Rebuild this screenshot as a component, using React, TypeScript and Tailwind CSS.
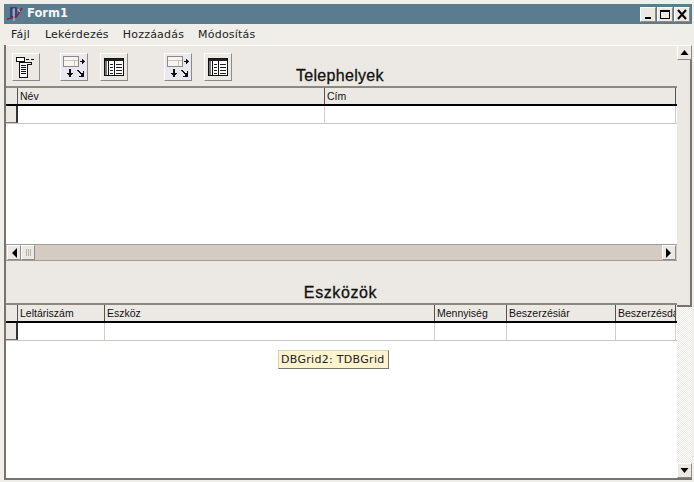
import React from 'react'

const ui = "font-['DejaVu_Sans',sans-serif]"
const grid = "font-['Liberation_Sans',Arial,sans-serif]"

const raised = 'border border-t-white border-l-white border-r-[#8d8a84] border-b-[#8d8a84]'

const ListIcon = () => (
  <svg width="22" height="22" viewBox="0 0 22 22" shapeRendering="crispEdges">
    <rect x="1.5" y="1.5" width="8" height="4" fill="#fff" stroke="#111" />
    <path d="M11 3h3M16 3h3" stroke="#111" />
    <path d="M4.5 6v15h8V8h4V6z" fill="#f4f4f4" stroke="#111" />
    <path d="M6 9h5M6 11h5M6 13h5M6 15h5M6 17h5" stroke="#111" />
  </svg>
)

const MoveIcon = () => (
  <svg width="24" height="24" viewBox="0 0 24 24" shapeRendering="crispEdges">
    <rect x="1.5" y="1.5" width="15" height="10" fill="#f6f5f2" stroke="#8d8a84" />
    <path d="M2 5h14M12 5v6" stroke="#c9c6c0" />
    <path d="M18 6h5v1h-5z" fill="#111" />
    <path d="M20 4h1v5h-1zM21 5h1v3h-1z" fill="#111" />
    <path d="M7 14h2v7H7z" fill="#111" />
    <path d="M5 18h6v1H5zM6 19h4v1H6zM7 20h2v2H7z" fill="#111" />
    <path d="M15 15h2v1h-2zM16 16h2v1h-2zM17 17h2v1h-2zM18 18h2v1h-2z" fill="#111" />
    <path d="M21 16h1v6h-1zM17 21h5v1h-5zM20 18h1v3h-1zM19 19h2v2h-2z" fill="#111" />
  </svg>
)

const TableIcon = () => (
  <svg width="20" height="18" viewBox="0 0 20 18" shapeRendering="crispEdges">
    <rect x="0.5" y="0.5" width="19" height="17" fill="#fff" stroke="#111" />
    <rect x="1" y="1" width="18" height="2" fill="#222" />
    <rect x="1" y="3" width="2" height="14" fill="#777" />
    <path d="M4.5 3v14M10.5 3v14" stroke="#111" />
    <path d="M6 6h3M12 6h6M6 9h3M12 9h6M6 12h3M12 12h6M6 15h3M12 15h6" stroke="#222" />
  </svg>
)

const ToolButton = ({ tint, children }: { tint?: boolean; children: React.ReactNode }) => (
  <button className={`flex h-[28px] w-[28px] items-center justify-center ${raised} ${tint ? 'bg-[#e9e7f0]' : 'bg-[#ece9e4]'}`}>
    {children}
  </button>
)

const Arrow = ({ d }: { d: string }) => (
  <svg width="8" height="10" viewBox="0 0 8 10"><path d={d} fill="#000" /></svg>
)

const WinButton = ({ children }: { children: React.ReactNode }) => (
  <div className={`flex h-[15px] w-[16px] items-center justify-center bg-[#ece9e4] ${raised}`}>
    <svg width="12" height="11" viewBox="0 0 12 11" shapeRendering="crispEdges">{children}</svg>
  </div>
)

type Col = { title: string; width: string }

const DataGrid = ({ cols, scrollbar }: { cols: Col[]; scrollbar?: boolean }) => (
  <div className="flex h-[175px] flex-col border-t-2 border-t-[#8b8880] bg-white">
    <div className={`flex h-[18px] border-b-2 border-b-black bg-[#ece9e4] ${grid}`}>
      <div className="w-[12px] border-r border-r-[#55534e]" />
      {cols.map((c) => (
        <div key={c.title} className={`${c.width} overflow-hidden whitespace-nowrap border-r border-r-[#55534e] pl-[2px] text-[10.5px] leading-[17px] text-[#111]`}>
          {c.title}
        </div>
      ))}
    </div>
    <div className="flex h-[18px] border-b border-b-[#c8c6c2]">
      <div className="w-[12px] border-r-2 border-b border-r-[#333] border-b-[#777] bg-[#ece9e4]" />
      {cols.map((c) => (
        <div key={c.title} className={`${c.width} border-r border-r-[#d0cec9]`} />
      ))}
    </div>
    <div className="flex-1" />
    {scrollbar && (
      <div className="flex h-[17px] items-center border-y border-y-[#a09c94] bg-[#d4ccc2] px-px">
        <div className={`flex h-[15px] w-[14px] items-center justify-center bg-[#ece9e4] ${raised}`}>
          <Arrow d="M7 0v10L2 5z" />
        </div>
        <div className={`flex h-[15px] w-[14px] items-center justify-center gap-px bg-[#ece9e4] ${raised}`}>
          <span className="h-[7px] w-px bg-[#b5b2ac]" />
          <span className="h-[7px] w-px bg-[#b5b2ac]" />
          <span className="h-[7px] w-px bg-[#b5b2ac]" />
        </div>
        <div className="flex-1" />
        <div className={`flex h-[15px] w-[14px] items-center justify-center bg-[#ece9e4] ${raised}`}>
          <Arrow d="M1 0v10l5-5z" />
        </div>
      </div>
    )}
  </div>
)

export default function App() {
  return (
    <div className={`relative flex h-[482px] w-[694px] flex-col overflow-hidden bg-[#f0eee9] pl-[4px] pr-[2px] pt-[4px] ${ui}`}>
      {/* Title bar */}
      <div className="flex h-[20px] shrink-0 items-center bg-[#5b7c8f] pl-[2px] pr-[2px]">
        <svg width="18" height="16" viewBox="0 0 18 16" fill="none">
          <path d="M5 2h5v9H5z" stroke="#3a2a70" strokeWidth="1.5" />
          <path d="M1 13c4-1 8-1 10-3l5-8" stroke="#7a2a40" strokeWidth="1.5" />
          <path d="M8 2v13M12 3l2 3" stroke="#d8d0e0" />
        </svg>
        <span className="ml-[3px] text-[11.5px] font-bold leading-none text-[#f4f6f7]">Form1</span>
        <div className="ml-auto flex gap-px">
          <WinButton><path d="M3 8h6v2H3z" fill="#000" /></WinButton>
          <WinButton><path d="M1.5 1.5h9v8h-9z" fill="none" stroke="#000" /><path d="M1 2h10" stroke="#000" strokeWidth="2" /></WinButton>
          <WinButton>
            <path d="M2 1l8 9M10 1l-8 9" stroke="#000" strokeWidth="2" shapeRendering="auto" />
          </WinButton>
        </div>
      </div>

      {/* Menu */}
      <div className="flex h-[21px] shrink-0 items-center gap-[14px] pl-[7px] text-[11px] leading-none tracking-[0.2px] text-[#222]">
        <span>Fájl</span>
        <span className="ml-px">Lekérdezés</span>
        <span>Hozzáadás</span>
        <span>Módosítás</span>
      </div>

      <div className="flex min-h-0 flex-1">
        <div className="flex w-[673px] flex-col border-l-2 border-l-[#77746e]">
          {/* Top panel */}
          <div className="relative flex h-[41px] items-start border-t border-t-white bg-[#ece9e4] pl-[6px] pt-[7px]">
            <ToolButton><ListIcon /></ToolButton>
            <div className="ml-[20px]"><ToolButton tint><MoveIcon /></ToolButton></div>
            <div className="ml-[12px]"><ToolButton><TableIcon /></ToolButton></div>
            <div className="ml-[36px]"><ToolButton tint><MoveIcon /></ToolButton></div>
            <div className="ml-[12px]"><ToolButton><TableIcon /></ToolButton></div>
            <span className={`absolute left-[290px] top-[21px] text-[16px] leading-[18px] tracking-[0.3px] text-[#111] ${grid} [-webkit-text-stroke:0.3px_#111]`}>Telephelyek</span>
          </div>

          <DataGrid
            scrollbar
            cols={[
              { title: 'Név', width: 'w-[307px]' },
              { title: 'Cím', width: 'w-[351px]' },
            ]}
          />

          {/* Second panel */}
          <div className="flex h-[42px] items-end justify-center bg-[#ece9e4] pr-[2px]">
            <span className={`text-[16px] leading-[20px] tracking-[0.6px] text-[#111] ${grid} [-webkit-text-stroke:0.3px_#111]`}>Eszközök</span>
          </div>

          <DataGrid
            cols={[
              { title: 'Leltáriszám', width: 'w-[87px]' },
              { title: 'Eszköz', width: 'w-[330px]' },
              { title: 'Mennyiség', width: 'w-[72px]' },
              { title: 'Beszerzésiár', width: 'w-[109px]' },
              { title: 'Beszerzésdátum', width: 'w-[60px]' },
            ]}
          />
        </div>

        {/* Vertical scrollbar */}
        <div className="flex h-[433px] w-[15px] flex-col bg-[repeating-conic-gradient(#ece9e4_0_25%,#ffffff_0_50%)] bg-[length:2px_2px]">
          <div className={`flex h-[15px] shrink-0 items-center justify-center bg-[#ece9e4] ${raised}`}>
            <svg width="9" height="5" viewBox="0 0 9 5"><path d="M4.5 0l4 5h-8z" fill="#000" /></svg>
          </div>
          <div className="h-[247px] shrink-0 border-r-2 border-b-2 border-r-[#77746e] border-b-[#77746e] bg-[#ece9e4]" />
          <div className="flex-1" />
          <div className={`flex h-[15px] shrink-0 items-center justify-center bg-[#ece9e4] ${raised}`}>
            <svg width="9" height="5" viewBox="0 0 9 5"><path d="M.5 0h8l-4 5z" fill="#000" /></svg>
          </div>
        </div>
      </div>

      <div className="h-[4px] shrink-0 border-t-2 border-t-[#77746e] bg-[#f0eee9]" />

      {/* Hint */}
      <div className="absolute left-[278px] top-[350px] flex h-[19px] w-[111px] items-center whitespace-nowrap border border-[#d8d2b8] border-b-[#77746e] border-r-[#77746e] bg-[#fdf3cf] pl-[2px] text-[11px] leading-none tracking-[0.3px] text-[#222]">
        DBGrid2: TDBGrid
      </div>
    </div>
  )
}
